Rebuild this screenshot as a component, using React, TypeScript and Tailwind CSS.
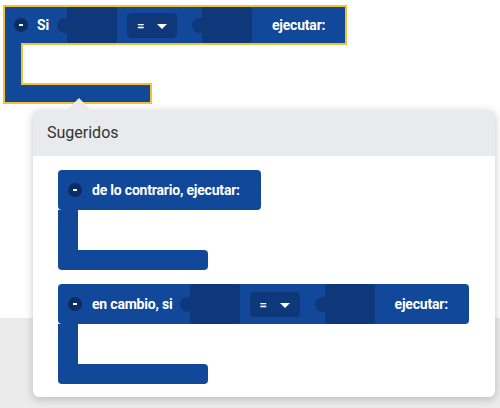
import React from 'react';

const font = { fontFamily: 'Roboto, "Noto Sans", sans-serif' };

function Minus() {
  return (
    <div className="w-[14px] h-[14px] rounded-full bg-[#0c2d62] flex items-center justify-center shrink-0">
      <div className="w-[4px] h-[1.5px] bg-white" />
    </div>
  );
}

function Slot() {
  return (
    <div className="flex items-center h-full">
      <div className="w-[10px] h-[15px] rounded-l-full bg-[#0f387a]" />
      <div className="w-[50px] h-full rounded-[3px] bg-[#0f387a]" />
    </div>
  );
}

function Dropdown() {
  return (
    <div className="w-[50px] h-[25px] rounded-[4px] bg-[#0f387a] flex items-center pl-[10px] gap-[13px] shrink-0">
      <span className="text-white text-[13px] font-bold leading-none">=</span>
      <div className="w-0 h-0 border-l-[5px] border-r-[5px] border-t-[5px] border-l-transparent border-r-transparent border-t-white mt-[2px]" />
    </div>
  );
}

function Label({ children }: { children: React.ReactNode }) {
  return (
    <span className="text-white text-[14px] font-bold tracking-[-0.2px] whitespace-nowrap leading-none">
      {children}
    </span>
  );
}

export default function App() {
  return (
    <div className="relative w-[500px] h-[408px] overflow-hidden bg-white" style={font}>
      <div className="flex flex-col h-full">
        <div className="h-[318px] bg-white pt-[5px] pl-[3px]">
          {/* selected block with yellow outline */}
          <div className="flex flex-col">
            <div className="w-[344px] h-10 bg-[#12489a] border-2 border-[#f2c230] flex items-center pl-[9px]">
              <Minus />
              <div className="ml-[9px]">
                <Label>Si</Label>
              </div>
              <div className="ml-[8px] h-full">
                <Slot />
              </div>
              <div className="ml-[10px]">
                <Dropdown />
              </div>
              <div className="ml-[15px] h-full">
                <Slot />
              </div>
              <div className="ml-[20px]">
                <Label>ejecutar:</Label>
              </div>
            </div>
            <div className="relative z-10 w-5 h-[42px] -my-[2px] bg-[#12489a] border-l-2 border-r-2 border-[#f2c230]" />
            <div className="w-[149px] h-[21px] bg-[#12489a] border-2 border-[#f2c230]" />
          </div>
        </div>
        <div className="flex-1 bg-[#ebebeb]" />
      </div>

      {/* suggestions popup */}
      <div className="absolute left-[33px] top-[110px] w-[462px] h-[287px] bg-white rounded-[6px] shadow-[0_2px_8px_rgba(0,0,0,0.22)]">
        <div className="absolute -top-[12px] left-[34px] w-0 h-0 border-l-[12px] border-r-[12px] border-b-[12px] border-l-transparent border-r-transparent border-b-[#e9eaec]" />
        <div className="h-[46px] bg-[#e9eaec] rounded-t-[6px] flex items-center px-[14px]">
          <span className="text-[16px] text-[#333333]">Sugeridos</span>
        </div>
        <div className="flex flex-col gap-[14px] pt-[14px] pl-[25px]">
          <div className="flex flex-col">
            <div className="w-[203px] h-10 bg-[#12489a] rounded-[4px] flex items-center pl-[10px]">
              <Minus />
              <div className="ml-[10px]">
                <Label>de lo contrario, ejecutar:</Label>
              </div>
            </div>
            <div className="w-5 h-10 bg-[#12489a]" />
            <div className="w-[150px] h-5 bg-[#12489a] rounded-[4px] rounded-tl-none" />
          </div>
          <div className="flex flex-col">
            <div className="w-[411px] h-10 bg-[#12489a] rounded-[4px] flex items-center pl-[10px]">
              <Minus />
              <div className="ml-[10px]">
                <Label>en cambio, si</Label>
              </div>
              <div className="ml-[7px] h-full">
                <Slot />
              </div>
              <div className="ml-[10px]">
                <Dropdown />
              </div>
              <div className="ml-[15px] h-full">
                <Slot />
              </div>
              <div className="ml-[20px]">
                <Label>ejecutar:</Label>
              </div>
            </div>
            <div className="w-5 h-10 bg-[#12489a]" />
            <div className="w-[150px] h-5 bg-[#12489a] rounded-[4px] rounded-tl-none" />
          </div>
        </div>
      </div>
    </div>
  );
}
